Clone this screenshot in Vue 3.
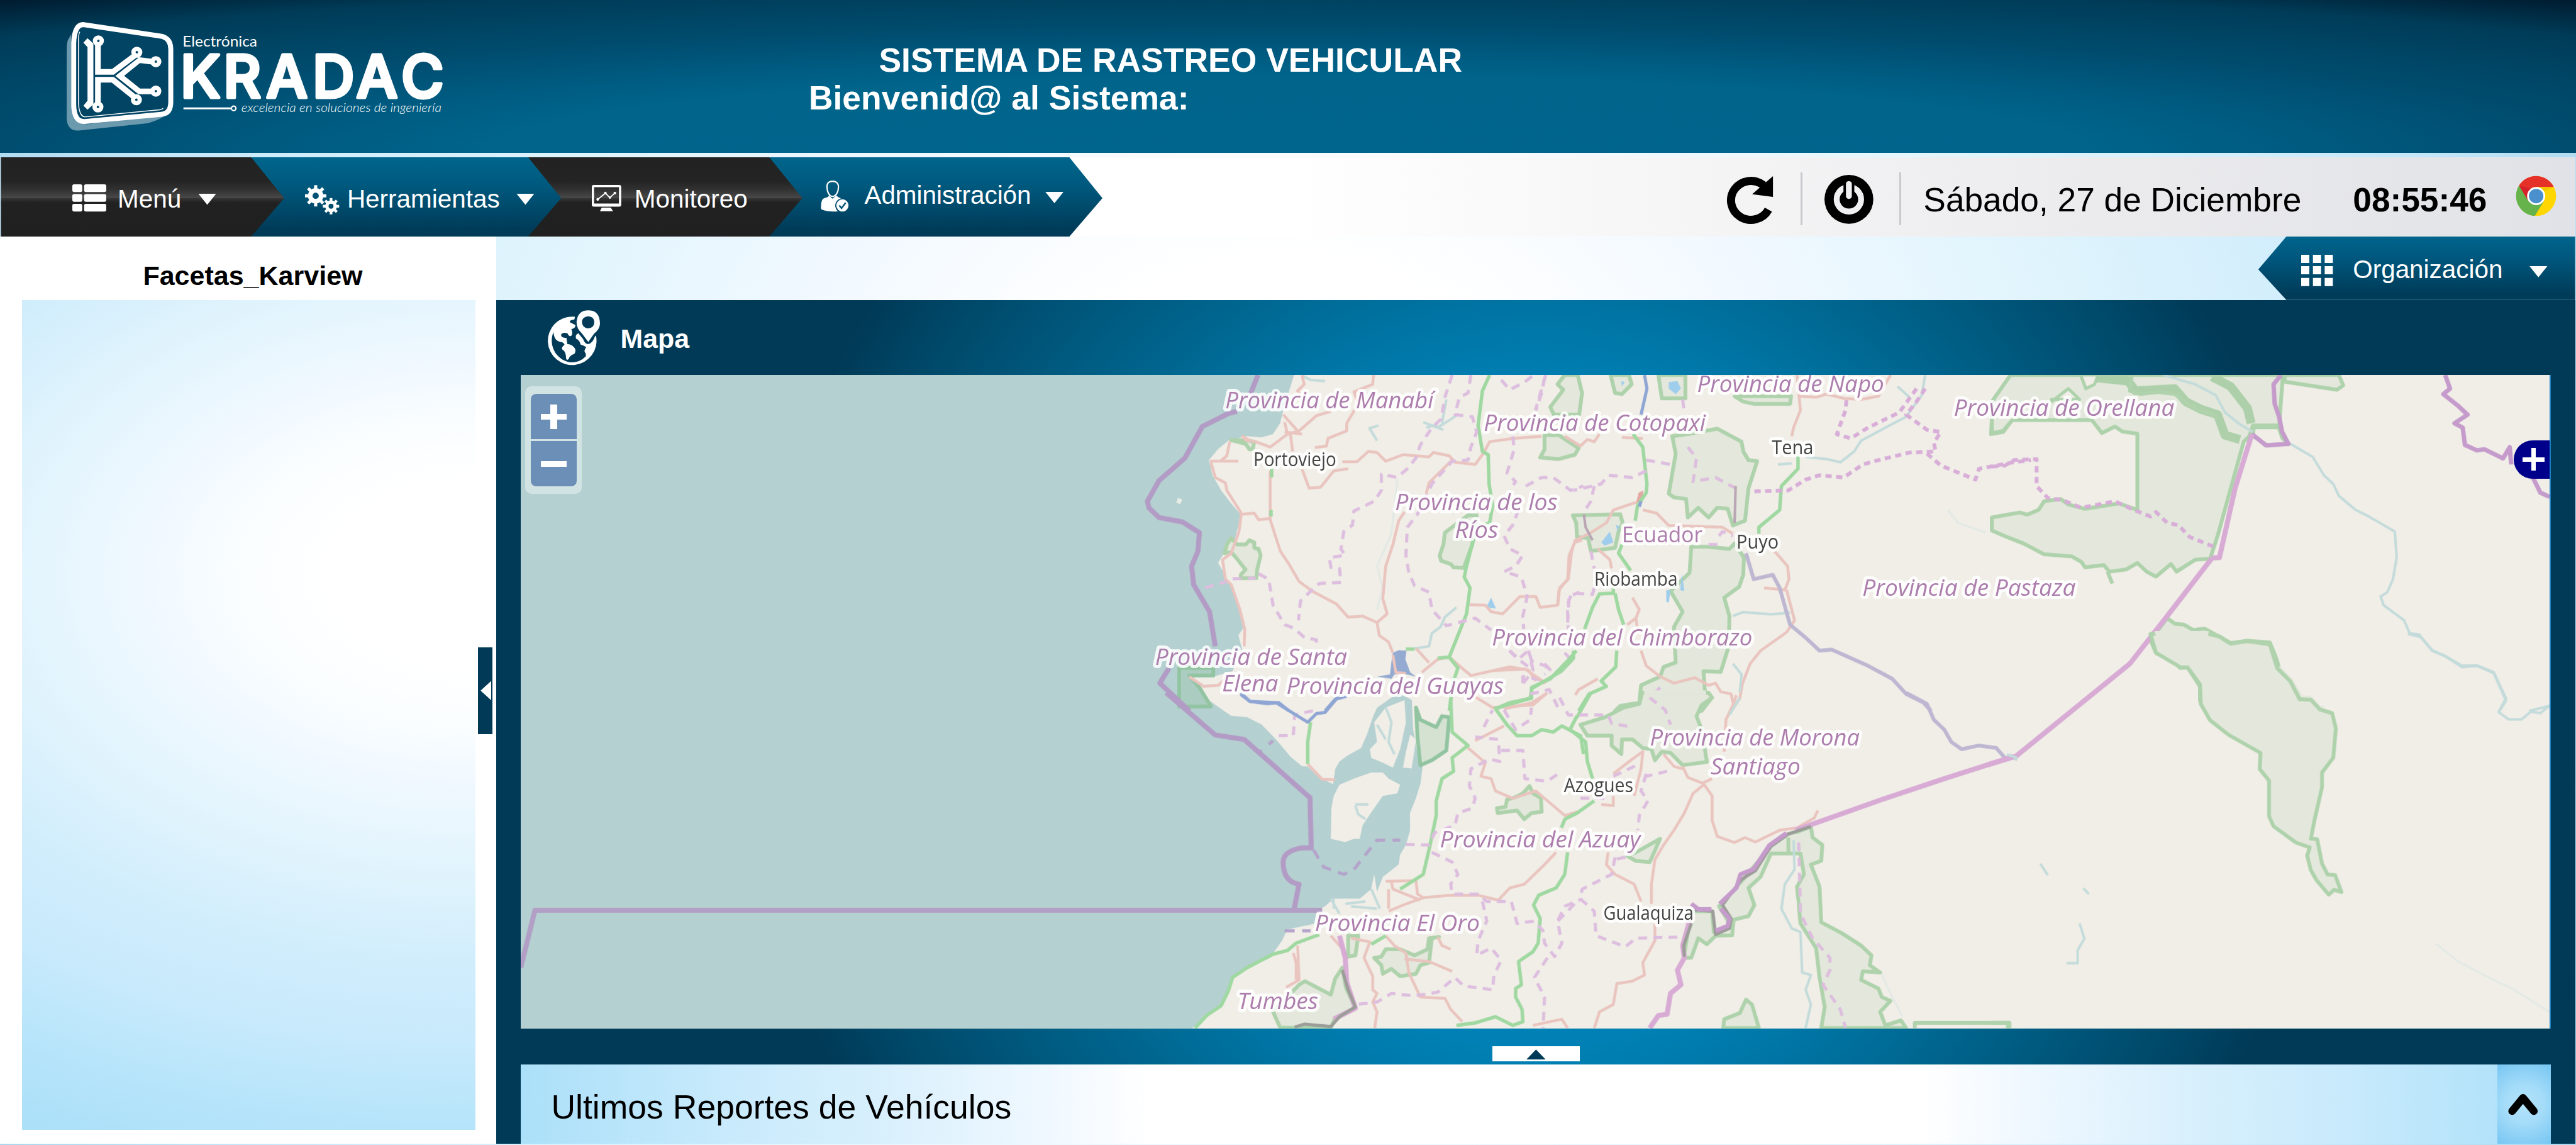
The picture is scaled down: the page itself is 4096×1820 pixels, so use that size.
<script setup>
const labels = [
  { t: 'Provincia de Manabí', x: 2707, y: 901, w: 460, k: 'prov' },
  { t: 'Provincia de los', x: 3082, y: 1127, w: 359, k: 'prov' },
  { t: 'Ríos', x: 3214, y: 1188, w: 96, k: 'prov' },
  { t: 'Provincia de Cotopaxi', x: 3278, y: 951, w: 490, k: 'prov' },
  { t: 'Provincia de Napo', x: 3749, y: 866, w: 413, k: 'prov' },
  { t: 'Provincia de Orellana', x: 4316, y: 919, w: 487, k: 'prov' },
  { t: 'Provincia de Pastaza', x: 4114, y: 1316, w: 471, k: 'prov' },
  { t: 'Provincia del Chimborazo', x: 3296, y: 1426, w: 575, k: 'prov' },
  { t: 'Provincia de Santa', x: 2552, y: 1468, w: 424, k: 'prov' },
  { t: 'Elena', x: 2700, y: 1527, w: 124, k: 'prov' },
  { t: 'Provincia del Guayas', x: 2842, y: 1532, w: 480, k: 'prov' },
  { t: 'Provincia de Morona', x: 3645, y: 1646, w: 463, k: 'prov' },
  { t: 'Santiago', x: 3779, y: 1710, w: 198, k: 'prov' },
  { t: 'Provincia del Azuay', x: 3181, y: 1871, w: 443, k: 'prov' },
  { t: 'Provincia El Oro', x: 2905, y: 2056, w: 364, k: 'prov' },
  { t: 'Tumbes', x: 2734, y: 2229, w: 178, k: 'prov' },
  { t: 'Ecuador', x: 3583, y: 1197, w: 178, k: 'country' },
  { t: 'Portoviejo', x: 2769, y: 1029, w: 183, k: 'city' },
  { t: 'Tena', x: 3914, y: 1003, w: 92, k: 'city' },
  { t: 'Puyo', x: 3836, y: 1212, w: 93, k: 'city' },
  { t: 'Riobamba', x: 3522, y: 1294, w: 184, k: 'city' },
  { t: 'Azogues', x: 3455, y: 1749, w: 153, k: 'city' },
  { t: 'Gualaquiza', x: 3542, y: 2031, w: 199, k: 'city' },
]

// Map sheets: each one has its own local grid
const sheets = [
  {
    m: 'translate(2500 820) scale(.6378 .4783)',
    p: [
      ['park', 'M345 770 L330 800 322 840 345 835 365 865 385 900 395 915 378 940 378 955 432 955 435 915 447 850 440 820 425 815 425 790 408 780 395 800 365 800Z'],
      ['parksea', 'M165 1370 H283 V1405 H200 L235 1460 275 1548 H165Z'],
      ['park', 'M345 318 H395 L425 325 420 358 408 360 395 335Z'],
      ['park', 'M1500 17 L1475 60 1495 85 1450 165 1462 200 H1550 L1560 100 1545 17Z'],
      ['park', 'M1430 295 H1480 L1548 355 1535 385 1480 405 1415 398 1430 360Z'],
      ['park', 'M1165 665 L1085 745 1080 800 1067 850 1072 875 1105 890 1115 905 1150 908 1180 800 1195 665Z'],
      ['urban', 'M905 1300 L925 1288 952 1290 948 1330 965 1390 985 1410 940 1395 910 1400 900 1420 850 1410 895 1400 900 1340Z'],
      ['lake', 'M1245 1045 L1228 1090 1262 1095Z'],
      ['river', 'M590 20 L620 40 670 45'],
      ['river', 'M820 265 L855 250 M825 265 L850 320'],
      ['river', 'M1010 235 L1050 255 1080 270 M1060 260 L1130 200 M1075 240 L1090 130 M1020 260 L1060 245'],
      ['river', 'M1125 1090 L1085 1135 1070 1180 1040 1210 1030 1270 980 1280'],
      ['faint', 'M920 500 L900 750 850 900 870 1000 850 1100'],
      ['road', 'M590 17 L598 60 575 90 590 120 M838 17 L835 60 770 95 785 150 745 240 745 275 680 310 675 345 635 352'],
      ['road', 'M690 185 L640 205 580 275 540 290 480 350 430 325 395 318 385 300 410 320 M525 200 L575 275 M530 235 L540 290 M550 290 L558 370 M530 280 L590 290'],
      ['road', 'M272 415 H370 M340 325 L330 390 310 412 M275 420 L290 490 325 515 330 550 380 655'],
      ['road', 'M730 418 H780 L820 370 850 375 880 415 940 385 1030 395 1045 375 1100 390 1120 420 1190 430 1220 375 1240 325 1320 310 1420 300'],
      ['road', 'M590 450 L615 540 655 535 700 460 750 450 M1110 410 L1060 475 1030 515 1020 565 M945 650 L925 690 905 800 880 900 870 1050 885 1120 850 1160 858 1220 890 1250 905 1300'],
      ['road', 'M480 460 V680 L440 685 425 655 380 660 372 740 345 840 315 870 325 960 345 985 375 1100 392 1190 390 1270'],
      ['road', 'M480 685 L515 830 545 890 580 970 625 1015 710 1075 750 1135 800 1130 850 1160'],
      ['road', 'M1170 1078 L1225 1080 1245 1110 1285 1120 1345 1040 1400 1040 1415 1090 1475 1080 1480 1010 1510 960 1515 850 1535 790 1560 780'],
      ['road', 'M1005 1390 L1060 1330 1100 1320 1175 1405 1310 1365 1375 1380 1400 1430 M985 1280 L1030 1345 M905 1310 L915 1390 950 1395'],
      ['road', 'M200 1410 L250 1455 300 1450 350 1390'],
      ['green', 'M485 450 V490 M483 640 V670 M1240 17 L1215 90 1200 250 1215 370 1235 385 1238 520 1250 620 1240 700 1195 720 1160 900 1152 950 1172 1000 1160 1120 1100 1320 1060 1325'],
      ['green', 'M1100 1320 L1130 1370 1115 1430 1100 1568 M950 1283 H980'],
      ['prov', 'M1110 17 L1085 120 1072 220 1040 260 1000 340 985 400 955 450 920 490 865 475 865 550 840 600 770 645 765 710 735 740 725 820 740 850 685 860 690 905 720 910 725 975 650 980 625 1010 585 1060 578 1150'],
      ['prov', 'M1175 17 L1165 100 1135 120 1120 200 1180 210 1195 280 1175 350 1165 410 1110 415 1040 520 990 660 955 720 950 850 960 930 980 990 1030 1020 1040 1100 1090 1175 1190 1140 1245 1195'],
      ['prov', 'M1280 40 L1310 85 1360 50 1390 20 M1430 30 L1420 100 1400 180 M1320 300 L1325 360 1300 470 1330 510 1310 545 M1365 530 L1420 490 1460 490 1520 550 1565 530'],
      ['prov', 'M1340 640 L1320 710 1290 760 1310 820 1355 850 1330 900 1290 925 1350 950 1370 1040 1355 1130 1358 1190 M1510 1160 L1515 1040 1550 1020'],
      ['prov', 'M440 935 L475 960 490 1080 530 1170 560 1185 600 1230 640 1240 640 1275 M350 958 L430 955 M255 1000 L330 970'],
      ['prov', 'M1310 1290 L1345 1335 1390 1380 1375 1290 M1430 1350 L1450 1380 1430 1400 M1355 1440 V1410 L1440 1430 M1500 1300 L1520 1330'],
      ['green', 'M1540 1290 L1515 1330 1450 1420 1385 1460 1385 1510 1310 1530 1260 1560'],
      ['seaborder', 'M438 17 L410 110 M365 185 L335 195 245 255 185 400 95 505 55 600 60 630 95 675 175 695 235 745 230 830 208 900 215 985 270 1110 290 1270 M130 1370 L98 1440 200 1568'],
      ['hwy', 'M378 1492 L410 1525 470 1535 510 1530 545 1568 M670 1568 L705 1515 745 1500'],
      ['isle', 'M158 595 L172 603'],
    ],
  },
  {
    m: 'translate(3300 820) scale(.7653 .4783)',
    p: [
      ['park', 'M337 17 L350 100 370 105 398 60 390 17Z'],
      ['park', 'M475 17 L485 125 H553 V17Z'],
      ['park', 'M695 115 L720 140 750 150 H855 L858 115Z'],
      ['park', 'M515 300 L525 380 505 565 520 582 555 590 560 675 590 630 620 675 645 630 675 635 690 712 725 690 735 540 760 415 735 410 720 370 715 325 645 265 560 290Z'],
      ['park', 'M228 665 L365 660 372 700 360 740 350 815 280 830 272 770 240 765 238 700Z'],
      ['park', 'M570 810 H615 L680 820 695 795 722 860 720 940 708 995 665 1045 680 1130 678 1270 655 1388 605 1385 610 1490 628 1510 600 1568 H350 L365 1545 420 1530 425 1450 480 1410 490 1365 525 1345 520 1180 545 1110 510 1015 565 930Z'],
      ['park', 'M1500 17 L1440 140 1435 290 1470 280 1500 215 1568 100 V17Z'],
      ['lake', 'M505 50 L530 45 540 80 525 105 505 80Z M310 790 L335 740 345 790 320 805Z M498 1010 L510 1010 505 1068 498 1065Z M543 935 L550 1015 538 1010Z M352 710 L362 715 358 740Z M368 45 L378 50 370 70Z'],
      ['road', 'M205 300 L250 345 270 315 290 325 305 290 M370 305 L430 310 M875 17 L885 180 865 260 860 300 M880 115 L930 120 960 105 1010 125 1060 130 1110 115 1145 17'],
      ['road', 'M430 570 L420 600 345 640 325 700 280 745 235 780 225 830 215 960 190 1000 185 1080'],
      ['road', 'M430 640 L470 655 505 712 660 720 690 750 M810 830 L848 900 852 960 840 1010 780 1000 M845 1010 L868 1150 845 1205 770 1290 740 1350 718 1440 710 1510 685 1568'],
      ['road', 'M300 820 L335 870 340 910 M400 1045 L420 1100 410 1140 385 1170 M410 1140 L415 1190 M425 1290 L440 1360 480 1410 520 1440 580 1415 620 1450 640 1440 655 1480 685 1490 690 1530'],
      ['road', 'M300 1420 L245 1470 235 1495 M0 1382 L90 1375 150 1440 M30 1560 L110 1530 150 1490'],
      ['redspot', 'M432 550 L418 560 412 600 425 612Z'],
      ['green', 'M402 290 L430 350 442 520 440 560 415 620 408 690 M370 800 L360 840 395 920 M345 1000 L345 1025 305 1028 285 1090 262 1190 M350 1025 L360 1100 375 1170 M230 1290 L230 1325 195 1385 110 1465 105 1510 20 1550 M355 1290 L352 1365 310 1430 325 1455 275 1490 245 1568'],
      ['green', 'M878 390 V450 L830 530 825 640 765 720 765 750'],
      ['hwy', 'M435 17 L442 80 425 200 M425 600 L420 625'],
      ['river', 'M1245 17 L1235 110 1190 210 1130 260 1060 320 1040 370 1000 420 960 405 900 395 M1165 70 L1200 120 M820 430 L860 425'],
      ['river', 'M690 1130 L720 1112 800 1122 855 1115 M690 1350 L715 1400 710 1480'],
      ['faint', 'M1310 640 L1340 700 1420 745'],
      ['bigprov', 'M1245 80 L1220 140 1190 200 1250 270 1290 280 1270 330 1275 370 1200 375 1110 410 1065 430 1010 490 940 480 900 500 850 550 740 555'],
      ['bigprov', 'M1250 380 L1290 435 1390 500 1400 450 1500 420 1550 410 M1220 80 L1170 190 1080 260 1030 310 990 290 1015 180 1018 130'],
      ['prov', 'M545 130 L550 190 M440 410 L510 430 M440 460 L400 490 330 480 310 520 230 550 M290 530 L280 600 260 650 M560 350 L585 400 575 510 640 490 680 525 700 540'],
      ['prov', 'M150 17 L120 180 M280 830 L290 910 M290 1000 L285 1030 225 1025 212 1080 215 1190 M650 760 L660 740 690 760 M620 800 H650'],
      ['border2', 'M698 530 L695 700 M260 660 L265 720 285 780'],
      ['riverprov', 'M728 840 L750 960 805 940 825 1000 855 1170 900 1230 940 1290 975 1285 1080 1360 1150 1420 1190 1490 1240 1530 1262 1568'],
      ['prov', 'M45 1290 L70 1330 100 1290 110 1340 150 1360 160 1390 M85 1440 L100 1410 M105 1490 L160 1470 190 1568 M480 1460 L445 1520 465 1568'],
    ],
  },
  {
    m: 'translate(4400 820) scale(.824 .4783)',
    p: [
      ['park', 'M50 17 L0 140 V285 L30 275 55 225 H268 L295 285 330 255 350 278 390 288 V640 L340 610 250 635 205 615 185 590 140 600 125 640 95 662 75 652 0 675 V735 L40 765 85 795 140 845 215 855 240 880 250 905 300 895 315 925 360 915 390 885 415 925 440 948 480 890 495 925 545 870 585 865 605 760 675 325 690 300 700 250 770 255 780 17Z'],
      ['cut', 'M238 17 H285 L275 60 252 80Z M160 140 L205 80 235 130 H160Z M703 260 H768 L778 310 795 335 740 342 700 300Z'],
      ['park', 'M785 17 V48 L925 85 942 65 930 17Z'],
      ['fat', 'M280 30 L365 45 385 90 490 80 520 140 560 175 605 200 625 295 665 315 M590 25 L640 70 685 170 695 240'],
      ['parkline', 'M310 925 L323 980 M700 250 H765 M375 17 L370 90 400 105 445 95 490 105 545 170 605 210'],
      ['park', 'M470 1140 L425 1240 440 1300 490 1340 505 1370 525 1368 558 1455 558 1520 575 1568 H890 L855 1512 825 1515 800 1430 780 1400 745 1252 685 1245 640 1255 570 1188 540 1195 515 1170 490 1165Z'],
      ['river', 'M460 17 L545 60 600 110 625 190 665 245 700 280 M800 335 L860 395 890 480 915 520 930 575 975 640 1010 670 1080 740 1085 860 1075 960 1060 1020 1042 1040 1050 1080 1105 1150 1120 1210 1145 1215 1180 1290 1215 1315 1260 1360 1300 1358 1345 1390 1378 1510 1360 1568 M1440 1568 L1495 1545'],
      ['natborder2', 'M775 17 L755 60 758 150 770 210 778 280 795 335 735 342 697 290 M1215 17 L1228 80 1210 105 1250 160 1275 200 1240 240 1262 260 1268 340 1300 365 1320 360 1370 402 1388 350 1392 430 M1450 490 L1470 560 1495 580'],
      ['natborder', 'M697 290 L652 540 610 860 590 862 M590 862 L470 1130 370 1350 65 1777 -9 1816'],
      ['bigprov', 'M0 440 L35 435 60 410 120 405 V530 L150 585 190 595 240 630 330 600 380 640 425 670 440 650 470 700 500 710 530 765 595 810'],
    ],
  },
  {
    m: 'translate(2500 1530) scale(.6378 .5421)',
    p: [
      ['land', 'M880 60 L945 30 950 120 930 230 905 305 870 285 830 265 825 230 850 200 840 120Z M965 170 L985 190 970 308 940 305 950 240Z M690 595 L692 470 700 420 720 375 770 350 830 325 870 325 890 350 930 375 920 410 870 420 840 470 800 540 790 595 770 595 740 608Z'],
      ['river', 'M775 455 H820 M775 460 L785 495 810 515 M690 840 L720 900 M740 860 L810 850 M830 800 L860 880 M880 60 L900 120 890 200 910 250 M850 130 L880 190 M700 840 L700 880 M760 870 L850 880'],
      ['parksea', 'M985 60 L1000 110 1055 140 1075 95 1100 100 1090 235 1040 275 1000 295 990 180Z'],
      ['park', 'M1378 380 L1355 410 1330 425 1300 435 1295 465 1265 470 1268 490 1335 480 1360 515 1385 490 1420 485 1418 430 1390 410Z'],
      ['park', 'M750 990 H785 L775 1070 750 1075Z'],
      ['park', 'M840 1080 L865 1075 880 1045 930 1045 980 1070 1025 1045 1030 1000 1065 995 1040 1000 1030 1100 1000 1110 985 1145 930 1155 900 1125 870 1145 865 1110Z'],
      ['park', 'M730 1120 L742 1200 775 1285 705 1325 690 1365 H515 L490 1300 580 1190 600 1175 690 1230 705 1165Z'],
      ['road', 'M610 290 L660 352 705 355 M575 1030 L580 1170 535 1200 M560 1060 L570 1100 570 1170'],
      ['road', 'M880 768 L985 765 990 820 1010 835 940 865 890 890 M900 770 L905 800 1000 845 M890 800 V880 M1010 835 L1100 825 1200 825 1270 845 1310 795 1360 780 1430 700 1470 650'],
      ['road', 'M760 1000 L825 1015 805 1080 835 1155 835 1210 850 1225 835 1260 850 1300 842 1366 M880 990 L910 1030 950 1060 960 1140 1000 1240 1085 1245 1105 1290 1145 1340'],
      ['road', 'M945 1085 L1030 1095 1110 1135 M1060 995 L1075 1030 1105 1045 M690 990 L735 1050 M1390 1355 L1490 1330 1510 1366'],
      ['road', 'M1165 225 L1225 285 1210 340 1245 350 1260 400 1320 430 1400 400 1500 500 1545 485 M1190 195 L1290 135 M1180 10 L1250 60 1390 50 1440 0'],
      ['green', 'M1105 25 L1110 160 1165 215 1110 265 1115 320 1075 350 1055 440 1055 500 1030 640 1010 740 930 800'],
      ['green', 'M1260 65 L1300 130 1335 175 1385 175 1420 150 1460 160 1490 135 1555 175 1565 250 M1255 65 L1385 20 M1510 650 L1500 740 1470 795 1410 825 1392 865 1415 920 1408 1020 1390 1055 1340 1095 1350 1190 1330 1205 1330 1240 1352 1290 1355 1340 1320 1355 1260 1320 1190 1345 1125 1355 M830 1025 L880 990'],
      ['green', 'M620 120 L610 200 610 290 M220 1366 L260 1315 310 1275 335 1215 350 1160 400 1120 490 1065 540 1050 570 1020 650 985'],
      ['seaprov', 'M630 640 L665 710 735 740 770 720 850 600 930 600'],
      ['prov', 'M950 618 L1030 620 1050 570 1120 540 1130 490 1180 470 1190 430 1170 380 1175 310 1240 270 1275 280 1270 190 1190 180'],
      ['prov', 'M1040 650 L1110 690 1130 740 1105 780 1110 820 1200 820 1230 850 1315 850 1335 940 1395 930 1425 970 1430 1020 1465 1075 1490 1020 1475 930 1500 870 1560 840'],
      ['prov', 'M1280 235 H1355 L1362 350 1440 360 1490 320 M1215 850 L1230 930 1200 1010 1195 1070 1245 1040 1280 1090 1255 1150 1250 1210 1150 1195 1120 1160 1060 1220 980 1235 900 1225 850 1260 780 1270'],
      ['prov', 'M1440 1080 L1395 1160 1430 1240 1425 1366 M1220 140 L1250 70 M1290 70 L1330 150 1380 110 1385 60 M510 175 H560 L565 90 640 70'],
      ['seaprov', 'M475 210 L490 195 M425 232 L452 240 M530 970 H620'],
      ['natborder', 'M720 990 L740 1080 745 1180 775 1285 700 1330'],
      ['greyb', 'M730 1130 L750 1210 775 1280 720 1320 690 1360 600 1350 565 1362'],
      ['seaborder', 'M120 0 L290 172 390 190 618 428 622 632 H590 Q525 645 525 690 Q525 770 580 780 L563 882'],
      ['bigborder', 'M-2115 1120 L-2066 886 H660'],
      ['hwy', 'M378 0 L410 35 500 40 610 120 640 85 670 80 720 10'],
    ],
  },
  {
    m: 'translate(3300 1530) scale(.7653 .5421)',
    p: [
      ['park', 'M428 0 L420 45 375 60 320 100 250 130 270 175 340 175 340 215 368 250 370 190 400 190 430 225 455 230 465 275 485 240 510 245 545 295 615 282 600 150 585 95 600 50 630 20 620 0Z'],
      ['cover', 'M434 -10 H612 V8 H434Z'],
      ['park', 'M480 595 L410 650 385 665 410 685 450 690Z'],
      ['park', 'M570 890 H630 L635 975 685 950 650 870 720 760 800 625 850 575 880 565 915 545 920 590 948 620 945 685 915 700 940 790 945 935 1005 980 1060 1030 1090 1070 1085 1110 1115 1140 1065 1135 1060 1170 1110 1205 1120 1240 1145 1255 1115 1300 1130 1355 1175 1335 1190 1366 H945 L955 1280 940 1160 930 1040 885 940 875 790 895 740 885 655 800 655 770 750 735 795 752 865 735 910 692 925 688 988 640 990 615 1025 590 1000 570 1080 548 1080Z'],
      ['park', 'M662 1366 L665 1330 710 1305 728 1250 745 1270 765 1366Z'],
      ['parkline', 'M1215 1366 V1345 H1488 V1366 M850 590 V650'],
      ['road', 'M700 10 L690 50 670 110 665 240 M545 300 L560 345 605 370 630 420 630 520 645 585 695 610 725 590 755 608 825 560 875 550 925 510 935 480 M610 370 L575 410 550 490 520 560 490 620 465 680 455 780 455 860 M630 350 L600 370'],
      ['road', 'M345 330 L400 270 430 240 425 310 405 420 M490 250 L520 300 545 310 M310 455 L345 460 345 420 M330 650 L325 700 350 740 405 780 425 850 M465 940 L465 1010 430 1100 435 1150 400 1175 355 1185 345 1270 305 1300 290 1366'],
      ['green', 'M240 100 L280 0 M240 95 L220 150 265 200 270 280 285 350 M290 440 L240 490 205 515 195 550'],
      ['river', 'M865 600 L868 720 840 780 830 880 860 960 885 975 890 1140 915 1150 900 1210 915 1270 900 1366 M710 20 L680 90'],
      ['faint', 'M1120 1150 L1150 1240 1180 1320'],
      ['river', 'M1485 250 L1510 275'],
      ['riverprov', 'M1190 0 L1250 45 1270 110 1300 150 1320 200 1350 230 1400 215 1450 225 1475 265'],
      ['prov', 'M190 20 L215 90 330 90 340 125 400 140 M450 20 L495 70 510 130 M440 330 L425 400 445 440 420 500 415 560 M350 670 L340 740 255 800 250 840 290 890 295 990 380 1035 410 1000 550 995 M500 320 L440 340 M380 670 L345 680 M345 340 L420 290 M250 430 H320 M185 930 L240 850'],
      ['prov', 'M880 610 L885 900 920 1000 970 1080 970 1130 950 1190 1000 1290 1015 1366'],
      ['natborder', 'M1500 260 L1300 350 1120 435 870 560 M565 930 L545 1030 550 1080 530 1130 540 1190 510 1225 500 1310 475 1315 450 1366'],
      ['greyb', 'M915 545 L850 575 800 625 755 725 715 760 660 865 685 920 680 960 640 985 632 890 580 885 M570 940 L548 1030 550 1075'],
      ['natborder2', 'M845 572 L795 622 750 718 712 740 700 795 652 860 M570 860 L590 882 628 882 M640 970 L675 950 680 920 655 880'],
    ],
  },
  {
    m: 'translate(4400 1400) scale(.824 .72)',
    p: [
      ['park', 'M580 0 L610 8 640 30 685 22 745 32 765 105 800 145 825 200 855 202 880 232 912 243 922 290 915 380 885 425 885 470 865 570 855 628 872 630 885 705 900 738 920 740 937 792 917 785 903 800 870 755 855 725 845 680 852 655 815 640 755 590 743 560 743 450 718 415 720 365 635 310 585 265 560 215 558 155 525 103 505 102 440 58 425 0Z'],
      ['cover', 'M436 -8 H580 L625 30 H740 L755 100 850 215 890 245 V100 H570 L560 120 530 90 510 90 450 50Z'],
      ['parkline', 'M580 0 L610 8 640 30 685 22 745 32 765 105 800 145 825 200 855 202 880 232 912 243'],
      ['cut2', 'M750 0 H900 V215 L880 222 857 190 832 188 806 138 774 100Z'],
      ['river', 'M1115 0 L1150 10 1180 50 1215 68 1260 102 1300 98 1345 120 1378 205 1358 240 1385 262 1420 262 1445 238 1470 243 1495 220 M40 370 L68 380 M130 705 L150 740 M245 780 L260 798 M235 888 L248 935 230 970 230 1010 200 1010'],
      ['faint', 'M1190 950 L1250 1005 1350 1065 1390 1085 1495 1160'],
      ['parkline', 'M0 1193 H45 L42 1210'],
    ],
  },
]

const coast = 'M2859 828 L2848 863 2835 906 2828 935 2812 959 2787 966 2755 963 2714 973 2691 992 2671 1016 2679 1050 2698 1083 2720 1112 2741 1136 2735 1164 2728 1193 2704 1222 2691 1243 2707 1270 2720 1298 2733 1327 2742 1356 2749 1384 2736 1403 2745 1437 2723 1482 2682 1494 2628 1494 2647 1514 2672 1547 2704 1570 2720 1581 2755 1584 2787 1600 2819 1633 2851 1671 2876 1692 2889 1693 2915 1717 2945 1732 2950 1698 2959 1682 2978 1668 3007 1652 3020 1622 3033 1584 3042 1563 3075 1540 3092 1531 3119 1546 3122 1611 3131 1660 3143 1693 3138 1731 3128 1763 3115 1796 3115 1834 3106 1866 3093 1888 3090 1909 3055 1937 3042 1970 3036 1931 3029 1964 3004 1985 2946 1985 2927 2002 2908 2012 2905 2040 2844 2053 2832 2078 2806 2115 2755 2137 2723 2159 2710 2191 2701 2218 2666 2243 2634 2271 H5640 V820 H2859Z'

const teeth = [0, 45, 90, 135, 180, 225, 270, 315]
</script>

<template>
  <div class="app">
    <header class="top">
      <svg class="logo" viewBox="140 40 850 260">
        <path d="M152 84 Q147 90 147 110 V262 Q149 290 174 288 L325 272 Q350 266 364 255 L190 274 Q160 270 157 225 V75Z" fill="#6b99ae" />
        <path d="M184 54 L358 80 Q377 86 377 108 V225 Q377 250 358 252 L187 268 Q163 270 162.500 230 V95 Q164 54 184 54Z" fill="#024464" stroke="#fff" stroke-width="11" />
        <path d="M176 70 Q173 74 173 90 V225 Q174 256 187 258 L345 243 Q358 242 360 239" fill="none" stroke="#fff" stroke-width="2" />
        <path d="M193 84 L206 96 V230 L193 242 184 233 193 222 V104 L184 94Z" fill="#fff" />
        <g fill="none" stroke="#fff" stroke-width="12.500">
          <path d="M216 95 V158.500 H249 L298 122" />
          <path d="M344 137 L307 132.500 264 167 307 201.500 H344" />
          <path d="M216 232 V176 H249 L299 216" />
        </g>
        <path d="M211 167.500 H252 L304 127 M252 167.500 L304 208" fill="none" stroke="#024464" stroke-width="2.500" />
        <g fill="#024464" stroke="#fff" stroke-width="9.500">
          <circle cx="217" cy="90" r="7.500" /><circle cx="302" cy="115" r="7.500" /><circle cx="344" cy="136" r="7.500" />
          <circle cx="344" cy="201" r="7.500" /><circle cx="301" cy="220" r="7.500" /><circle cx="216" cy="236" r="7.500" />
        </g>
        <text x="403" y="103" class="l1" textLength="165" lengthAdjust="spacingAndGlyphs">Electrónica</text>
        <text class="l2" y="214.500" x="398 493 588 690 787 886">KRADAC</text>
        <path d="M405 239 H510" stroke="#fff" stroke-width="4" /><circle cx="516" cy="239" r="5" fill="none" stroke="#fff" stroke-width="3" />
        <text x="533" y="247" class="l3" textLength="442" lengthAdjust="spacingAndGlyphs">excelencia en soluciones de ingeniería</text>
      </svg>
      <div class="titles">
        <div class="t1">SISTEMA DE RASTREO VEHICULAR</div>
        <div class="t2">Bienvenid@ al Sistema:</div>
      </div>
    </header>

    <div class="bar">
      <nav class="tabs">
        <div class="tab black menu">
          <svg class="i-menu" viewBox="0 0 75 60" fill="#fff">
            <rect width="22" height="17" rx="4" /><rect x="26" width="49" height="17" rx="4" />
            <rect y="21.500" width="22" height="17" rx="4" /><rect x="26" y="21.500" width="49" height="17" rx="4" />
            <rect y="43" width="22" height="17" rx="4" /><rect x="26" y="43" width="49" height="17" rx="4" />
          </svg>
          <span>Menú</span><i class="tri"></i>
        </div>
        <div class="tab blue herr">
          <svg class="i-gear" viewBox="0 0 76 66" fill="#fff">
            <g transform="translate(23.500 24)">
              <path fill-rule="evenodd" d="M-17 0 A17 17 0 1 1 17 0 A17 17 0 1 1 -17 0 M-7 0 A7 7 0 1 0 7 0 A7 7 0 1 0 -7 0" />
              <rect v-for="a in teeth" :key="a" x="-3.500" y="-23.500" width="7" height="9" :transform="`rotate(${a})`" />
            </g>
            <g transform="translate(57.500 47)">
              <path fill-rule="evenodd" d="M-13 0 A13 13 0 1 1 13 0 A13 13 0 1 1 -13 0 M-5.500 0 A5.500 5.500 0 1 0 5.500 0 A5.500 5.500 0 1 0 -5.500 0" />
              <rect v-for="a in teeth" :key="a" x="-3" y="-18" width="6" height="7" :transform="`rotate(${a})`" />
            </g>
          </svg>
          <span>Herramientas</span><i class="tri"></i>
        </div>
        <div class="tab black moni">
          <svg class="i-mon" viewBox="0 0 65 58" fill="none" stroke="#fff">
            <rect x="2.500" y="2.500" width="60" height="43" rx="2" stroke-width="5" /><path d="M2 44 H63" stroke-width="6" />
            <path d="M22 50 H42 L47 58 H18Z" fill="#fff" stroke="none" />
            <path d="M13 32 L30 18 40 28 51 18" stroke-width="2.500" />
            <g fill="#fff" stroke="none"><circle cx="13" cy="32" r="3" /><circle cx="30" cy="18" r="3" /><circle cx="40" cy="28" r="2.500" /><circle cx="51" cy="18" r="3" /></g>
          </svg>
          <span>Monitoreo</span>
        </div>
        <div class="tab blue admi">
          <svg class="i-user" viewBox="0 0 62 70">
            <path d="M26 1.500 C16 1.500 13 8 14 16 C14 26 20 35 26 35 C33 35 39 26 39 16 C40 8 36 1.500 26 1.500Z" fill="none" stroke="#fff" stroke-width="3" />
            <path d="M18 33 L26 40 35 33 Q37 37 45 39 Q32 44 32 54 Q32 63 38 68 Q18 70 2 64 Q-1 62 2 46 Q4 39 11 38 Q17 37 18 33Z" fill="#fff" />
            <circle cx="48" cy="55" r="13.500" fill="#fff" /><path d="M41 55 L46 61 55 49" fill="none" stroke="#00547a" stroke-width="3.500" />
          </svg>
          <span>Administración</span><i class="tri"></i>
        </div>
      </nav>
      <div class="tools">
        <svg class="i-ref" viewBox="0 0 104 104"><path d="M93 74 A44 43 0 1 1 82 20" fill="none" stroke="#000" stroke-width="18" /><path d="M103 0 V46 L57 40Z" /></svg>
        <i class="div"></i>
        <svg class="i-pow" viewBox="0 0 108 108"><circle cx="54" cy="54" r="54" /><circle cx="54" cy="54" r="27" fill="none" stroke="#f0f0f2" stroke-width="13" /><rect x="42" y="10" width="24" height="42" /><rect x="47.500" y="14" width="13" height="39" rx="6" fill="#f0f0f2" /></svg>
        <i class="div"></i>
        <span class="date">Sábado, 27 de Diciembre</span>
        <span class="time">08:55:46</span>
        <svg class="i-chrome" viewBox="0 0 88 88">
          <circle cx="44" cy="44" r="44" fill="#ffd600" />
          <path d="M44 44 L6 21 A44 44 0 0 1 83 24 H44Z" fill="#e53128" />
          <path d="M6 21 A44 44 0 0 0 41 88 L62 54 H30Z" fill="#66b34b" /><path d="M6 21 L26 54 44 30Z" fill="#d5222a" />
          <path d="M44 24 H83 L62 34Z" fill="#f2c700" />
          <circle cx="44" cy="44" r="20" fill="#fff" /><circle cx="44" cy="44" r="16" fill="#4a90cc" />
        </svg>
      </div>
    </div>

    <div class="body">
      <aside class="side">
        <h3>Facetas_Karview</h3>
        <div class="row">
          <div class="panel"></div>
          <div class="grip"><i></i></div>
        </div>
      </aside>
      <section class="main">
        <div class="strip">
          <div class="org">
            <svg class="i-grid" viewBox="0 0 70 69" fill="#fff"><path d="M0 0H18V18H0ZM26 0H44V18H26ZM52 0H70V18H52ZM0 25H18V43H0ZM26 25H44V43H26ZM52 25H70V43H52ZM0 51H18V69H0ZM26 51H44V69H26ZM52 51H70V69H52Z" /></svg>
            <span>Organización</span><i class="tri"></i>
          </div>
        </div>
        <div class="stage">
          <div class="maphead">
            <svg class="i-globe" viewBox="228 467 166 310" preserveAspectRatio="none">
              <path fill-rule="evenodd" fill="#fff" d="M305 503 A77 136 0 1 0 381 615 L378 610 Q370 655 355 658 Q345 655 340 630 L325 597 Q313 605 318 628 Q328 635 332 660 Q342 665 350 675 Q342 685 345 703 Q350 710 348 727 Q330 760 305 760 A67 122 0 0 1 246 590 Q248 640 268 645 Q280 648 281 662 Q270 675 274 688 Q286 700 286 740 Q289 750 294 742 Q296 722 312 712 Q320 690 311 675 Q302 658 290 658 L287 622 Q270 625 270 605 Q275 588 290 597 Q298 625 305 605 Q306 580 302 575 Q318 565 315 550 L298 535 Q296 522 312 520 L314 504Z" />
              <path fill-rule="evenodd" fill="#fff" d="M356 468 Q393 468 393 545 Q392 575 375 598 L356 645 336 598 Q319 570 319 535 Q322 468 356 468Z M356 501 Q336 504 336 535 Q338 569 356 569 Q375 567 375 535 Q375 503 356 501Z" />
            </svg>
            <span>Mapa</span>
          </div>
          <div class="map">
            <svg class="canvas" viewBox="1151 828 4481 1443" preserveAspectRatio="none">
              <g class="geo">
                <path :d="coast" class="landmass" />
                <g v-for="(s, i) in sheets" :key="i" :transform="s.m">
                  <path v-for="(p, j) in s.p" :key="j" :class="p[0]" :d="p[1]" />
                </g>
              </g>
              <text v-for="l in labels" :key="l.t" :class="'lb ' + l.k" :x="l.x" :y="l.y" :textLength="l.w" lengthAdjust="spacingAndGlyphs">{{ l.t }}</text>
            </svg>
            <div class="zoomer">
              <div class="zb up"><b class="h"></b><b class="v"></b></div>
              <div class="zb dn"><b class="h"></b></div>
            </div>
            <div class="layers"><b class="h"></b><b class="v"></b></div>
          </div>
          <div class="gap"><div class="lift"><i></i></div></div>
          <div class="report">
            <span>Ultimos Reportes de Vehículos</span>
            <div class="open"><svg viewBox="0 0 66 48"><path d="M9 39 L33 10 57 39" fill="none" stroke="#000" stroke-width="17" stroke-linecap="round" stroke-linejoin="round" /></svg></div>
          </div>
        </div>
      </section>
    </div>
  </div>
</template>

<style>
/* 1rem is 100 units of the 5692-unit wide layout grid */
html { font-size: calc(100vw / 56.92); }
body { margin: 0; overflow: hidden; }
</style>

<style scoped>
* { box-sizing: border-box; }
.app {
  height: 100vh; display: flex; flex-direction: column; overflow: hidden;
  font-family: "Liberation Sans", Arial, sans-serif; color: #000; white-space: nowrap;
  background: radial-gradient(circle, #fff 22%, #f0f8ff 40%, #e2f5fd 55%, #d9f1fc 65%, #d3eefc 73%, #c4e7fa 85%, #abd8ee 100%);
}
svg { display: block; flex: none; overflow: visible; }
.top {
  height: 3.375rem; flex: none; display: flex; margin-bottom: .1rem;
  background: radial-gradient(49rem 4.77rem at 50% 100%, #00658c 0%, #00648b 36%, #005a80 46%, #004c6e 59%, #003c58 79%, #001a2e 92%);
}
.logo { width: 8.5rem; height: 2.6rem; margin: .4rem 0 0 1.4rem; }
.l1 { font: 400 33px Lato, sans-serif; fill: #fff; }
.l2 { font: 500 129px Inter, sans-serif; fill: #fff; stroke: #fff; stroke-width: 7px; stroke-linejoin: round; }
.l3 { font: italic 300 28px Lato, sans-serif; fill: #fff; }
.titles { margin: .92rem 0 0 7.97rem; color: #fff; font-weight: 700; font-size: .743rem; line-height: .83rem; }
.t1 { padding-left: 1.55rem; }

.bar {
  height: 1.75rem; flex: none; display: flex; margin: 0 .02rem; justify-content: space-between;
  background: linear-gradient(90deg, #fff 50%, #ececee 80%, #e1e2e7 100%);
}
.tabs { display: flex; }
.tab {
  height: 1.75rem; display: flex; align-items: flex-start; color: #fff; font-size: .562rem; line-height: .64rem;
  margin-right: -.73rem; clip-path: polygon(0 0, calc(100% - .73rem) 0, 100% 51.500%, calc(100% - .73rem) 100%, 0 100%);
  position: relative;
}
.black { background: linear-gradient(#222 0, #242424 30%, #303030 40%, #484848 51.400%, #343434 52%, #212121 57%, #202020 100%); }
.blue { background: linear-gradient(#00658c 0, #00597e 35%, #003b58 92%, #003a57 100%); }
.menu { width: 6.26rem; z-index: 4; padding-left: 1.58rem; }
.herr { width: 6.85rem; z-index: 3; padding-left: 1.19rem; }
.moni { width: 6.06rem; z-index: 2; padding-left: 1.4rem; }
.admi { width: 7.36rem; z-index: 1; padding-left: 1.13rem; }
.tab span { margin-top: .59rem; }
.menu span { margin-left: .25rem; width: 1.78rem; }
.herr span { margin-left: .17rem; width: 3.74rem; }
.moni span { margin-left: .3rem; }
.admi span { margin: .52rem 0 0 .35rem; width: 4rem; }
.tri { width: .4rem; height: .25rem; background: #fff; clip-path: polygon(0 0, 100% 0, 50% 100%); margin-top: .8rem; flex: none; }
.admi .tri { margin-top: .765rem; }
.i-menu { width: .75rem; height: .6rem; margin-top: .59rem; }
.i-gear { width: .76rem; height: .66rem; margin-top: .61rem; }
.i-mon { width: .65rem; height: .58rem; margin-top: .61rem; }
.i-user { width: .62rem; height: .7rem; margin-top: .51rem; }
.tools { display: flex; align-items: flex-start; font-size: .74rem; line-height: .84rem; padding-right: .42rem; }
.i-ref { width: 1.04rem; height: 1.04rem; margin: .41rem .61rem 0 0; }
.div { width: .04rem; height: 1.17rem; margin-top: .33rem; background: #c8c9cc; flex: none; }
.i-pow { width: 1.08rem; height: 1.08rem; margin: .39rem .58rem 0 .48rem; }
.date { margin: .53rem 0 0 .49rem; width: 9.49rem; }
.time { margin-top: .53rem; font-weight: 700; width: 3.61rem; }
.i-chrome { width: .88rem; height: .88rem; margin-top: .41rem; }

.body { flex: none; height: 20.045rem; display: flex; }
.side { width: 10.96rem; background: #fff; display: flex; flex-direction: column; }
h3 { margin: 0; height: 1.4rem; padding: .52rem 0 0 3.16rem; font-size: .598rem; line-height: .7rem; }
.row { display: flex; padding-left: .49rem; height: 18.33rem; }
.panel { width: 10.02rem; background: radial-gradient(21.5rem 13.8rem at 100% 33%, #fff 0, #fff 15%, #f9fdff 25%, #f0f8ff 34%, #e4f5fd 45%, #d0edfc 63%, #c8eafc 75%, #b5e4fa 89%, #abe0f9 100%); }
.grip { width: .32rem; height: 1.92rem; margin: 7.67rem 0 0 .05rem; background: #003a57; padding: .74rem 0 0 .06rem; }
.grip i { display: block; width: .24rem; height: .44rem; background: #fff; clip-path: polygon(100% 0, 100% 100%, 0 50%); }
.main { flex: 1; display: flex; flex-direction: column; min-width: 0; }
.strip { height: 1.4rem; flex: none; display: flex; justify-content: flex-end; padding-right: .02rem; }
.org {
  width: 7rem; height: 1.4rem; display: flex; color: #fff; font-size: .562rem; line-height: .64rem; padding-left: .95rem;
  background: linear-gradient(#00658c 0, #00547a 40%, #003b58 92%); clip-path: polygon(.62rem 0, 100% 0, 100% 100%, .62rem 100%, 0 52%);
}
.i-grid { width: .7rem; height: .69rem; margin-top: .41rem; }
.org span { margin: .4rem 0 0 .44rem; width: 3.9rem; }
.org .tri { margin-top: .65rem; }
.stage {
  flex: 1; margin-right: .02rem; display: flex; flex-direction: column; padding: 0 .53rem 0 .55rem;
  background: radial-gradient(circle at 50% 50%, #0088c0 0, #0080b4 29%, #0076a6 36%, #00628a 48%, #004a6b 62%, #003a57 70%);
}
.maphead { height: 1.66rem; flex: none; display: flex; color: #fff; font-weight: 700; font-size: .595rem; line-height: .7rem; padding-left: .59rem; }
.i-globe { width: 1.16rem; height: 1.22rem; margin-top: .23rem; }
.maphead span { margin: .5rem 0 0 .45rem; }
.map { height: 14.43rem; flex: none; position: relative; border-right: .04rem solid #1c7fc2; background: #b5d0d0; overflow: hidden; }
.canvas { width: 100%; height: 100%; overflow: hidden; }
.geo { filter: blur(1px); }
.geo path { fill: none; vector-effect: non-scaling-stroke; stroke-linejoin: round; }
.geo .landmass, .geo .land, .geo .cut, .geo .cut2 { fill: #f1eee8; }
.geo .cut { stroke: #aed2ab; stroke-width: 5px; }
.geo .cover { fill: #e4e8dc; }
.geo .park { fill: #e4e8dc; stroke: #aed2ab; stroke-width: 6px; }
.geo .parksea { fill: rgba(150, 200, 160, .3); stroke: #93c4a2; stroke-width: 6px; }
.geo .parkline { stroke: #b0d2ad; stroke-width: 6px; }
.geo .fat { stroke: #add0aa; stroke-width: 14px; }
.geo .urban { fill: #94aad0; }
.geo .lake { fill: #9fcdec; }
.geo .isle { stroke: #e8ece6; stroke-width: 8px; }
.geo .redspot { fill: #e3a9a3; }
.geo .river { stroke: #c3dbda; stroke-width: 4px; }
.geo .faint { stroke: #e2e9e4; stroke-width: 3px; }
.geo .road { stroke: #eac4be; stroke-width: 4.500px; }
.geo .green { stroke: #9fd8a0; stroke-width: 5.500px; }
.geo .hwy { stroke: #8fa6d4; stroke-width: 5px; }
.geo .prov { stroke: #ddbedf; stroke-width: 5px; stroke-dasharray: 14 10; }
.geo .seaprov { stroke: #b4a4cb; stroke-width: 5px; stroke-dasharray: 16 12; }
.geo .bigprov { stroke: #d8aed8; stroke-width: 6px; stroke-dasharray: 10 7; }
.geo .border2 { stroke: #b9a5b4; stroke-width: 4px; }
.geo .riverprov { stroke: #beb7d2; stroke-width: 6px; }
.geo .seaborder { stroke: #b29cc6; stroke-width: 8px; }
.geo .bigborder { stroke: #b29fc6; stroke-width: 8px; }
.geo .natborder { stroke: #d8abd5; stroke-width: 8px; }
.geo .natborder2 { stroke: #c59bcb; stroke-width: 7px; }
.geo .greyb { stroke: #9c9c98; stroke-width: 5px; }
.lb { font-family: "Open Sans", "Noto Sans", sans-serif; paint-order: stroke; stroke: rgba(255, 255, 255, .85); stroke-width: 14px; stroke-linejoin: round; }
.lb.prov { font-size: 51px; font-style: italic; fill: #ac7dad; }
.lb.country { font-size: 48px; fill: #ac7dad; }
.lb.city { font-size: 42px; fill: #444; }
.zoomer {
  position: absolute; left: .1rem; top: .25rem; width: 1.25rem; height: 2.38rem; border-radius: .14rem;
  background: rgba(255, 255, 255, .4); padding: .17rem .12rem; display: flex; flex-direction: column; gap: .04rem;
}
.zb { height: 1.02rem; background: #6b8fb7; display: grid; place-items: center; }
.up { border-radius: .12rem .12rem 0 0; }
.dn { border-radius: 0 0 .12rem .12rem; }
.h, .v { grid-area: 1 / 1; background: #fff; }
.zb .h { width: .58rem; height: .13rem; }
.zb .v { width: .15rem; height: .55rem; }
.layers { position: absolute; right: 0; top: 1.44rem; width: .8rem; height: .85rem; border-radius: .42rem 0 0 .42rem; background: #00008b; display: grid; place-items: center; padding-left: .08rem; }
.layers .h { width: .48rem; height: .1rem; }
.layers .v { width: .1rem; height: .5rem; }
.gap { height: .8rem; flex: none; display: flex; justify-content: center; align-items: flex-start; }
.lift { width: 1.93rem; height: .33rem; margin-top: .4rem; background: #fff; display: flex; justify-content: center; }
.lift i { width: .43rem; height: .22rem; margin-top: .07rem; background: #003a57; clip-path: polygon(50% 0, 100% 100%, 0 100%); }
.report {
  flex: 1; display: flex; justify-content: space-between; font-size: .744rem; line-height: .84rem; padding-left: .67rem;
  background: linear-gradient(90deg, #abe0f9 0, #c8eafc 10%, #d6effc 17%, #f0f8ff 26%, #fff 31%, #fff 69%, #f0f8ff 74%, #d6effc 83%, #c8eafc 90%, #abe0f9 100%);
}
.report span { margin-top: .52rem; }
.open { width: 1.19rem; display: flex; justify-content: center; padding-right: .04rem; background: radial-gradient(circle, #b3e3fa 0, #a5dcf9 40%, #76c6f3 100%); }
.open svg { width: .66rem; height: .48rem; margin-top: .64rem; }
</style>
